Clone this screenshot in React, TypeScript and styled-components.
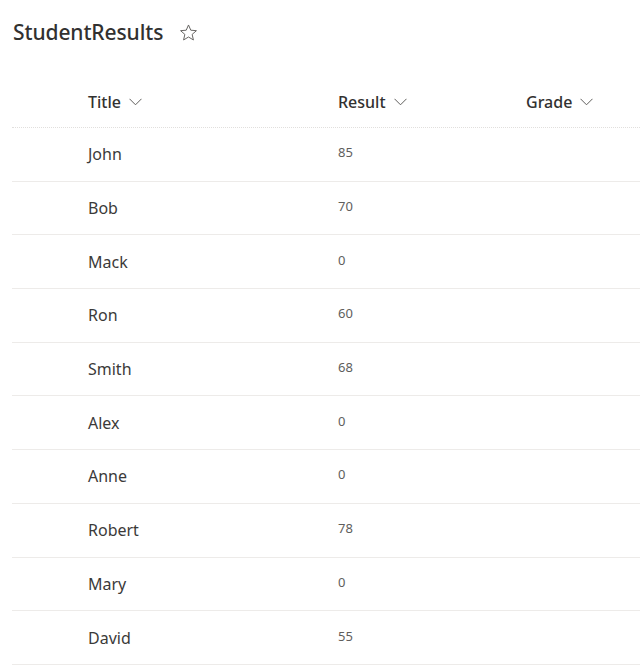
import React from 'react';
import styled, { createGlobalStyle } from 'styled-components';

const GlobalStyle = createGlobalStyle`
  body {
    margin: 0;
    background: #ffffff;
    font-family: "Segoe UI", "Noto Sans", "Open Sans", sans-serif;
    color: #323130;
  }
`;

const Page = styled.div`
  width: 640px;
  height: 669px;
  overflow: hidden;
  padding-left: 12px;
  box-sizing: border-box;
`;

const Heading = styled.div`
  display: flex;
  align-items: center;
  gap: 16px;
  height: 64px;
  padding-left: 1px;
`;

const ListTitle = styled.h1`
  margin: 0;
  font-size: 21px;
  font-weight: 500;
  color: #323130;
  letter-spacing: -0.1px;
`;

const FavButton = styled.button`
  display: flex;
  align-items: center;
  padding: 0;
  border: none;
  background: transparent;
  color: #605e5c;
  cursor: pointer;
`;

const Row = styled.div<{ $header?: boolean }>`
  display: grid;
  grid-template-columns: 76px 250px 188px 1fr;
  align-items: center;
  height: ${p => (p.$header ? '64px' : '53.7px')};
  box-sizing: border-box;
  border-bottom: 1px ${p => (p.$header ? 'dotted #e1dfdd' : 'solid #edebe9')};
`;

const HeaderCell = styled.div`
  display: flex;
  align-items: center;
  gap: 8px;
  font-size: 16px;
  font-weight: 500;
  color: #323130;
  padding-top: 12px;
`;

const TitleCell = styled.div`
  font-size: 16px;
  color: #3b3a39;
`;

const NumberCell = styled.div`
  font-size: 13px;
  color: #605e5c;
  margin-top: -4px;
`;

const Chevron = () => (
  <svg width="13" height="8" viewBox="0 0 13 8" fill="none">
    <path d="M0.5 0.8 L6.5 6.8 L12.5 0.8" stroke="#605e5c" strokeWidth="1" />
  </svg>
);

const StarIcon = () => (
  <svg width="19" height="19" viewBox="0 0 24 24" fill="none">
    <path
      d="M12 2.5l2.9 6.6 7.1.6-5.4 4.7 1.6 7-6.2-3.7-6.2 3.7 1.6-7L2 9.7l7.1-.6z"
      stroke="#605e5c"
      strokeWidth="1.2"
      strokeLinejoin="round"
    />
  </svg>
);

const students = [
  { title: 'John', result: 85 },
  { title: 'Bob', result: 70 },
  { title: 'Mack', result: 0 },
  { title: 'Ron', result: 60 },
  { title: 'Smith', result: 68 },
  { title: 'Alex', result: 0 },
  { title: 'Anne', result: 0 },
  { title: 'Robert', result: 78 },
  { title: 'Mary', result: 0 },
  { title: 'David', result: 55 },
];

export default function App() {
  return (
    <Page>
      <GlobalStyle />
      <Heading>
        <ListTitle>StudentResults</ListTitle>
        <FavButton aria-label="Favorite">
          <StarIcon />
        </FavButton>
      </Heading>
      <Row $header>
        <div />
        <HeaderCell>Title <Chevron /></HeaderCell>
        <HeaderCell>Result <Chevron /></HeaderCell>
        <HeaderCell>Grade <Chevron /></HeaderCell>
      </Row>
      {students.map(s => (
        <Row key={s.title}>
          <div />
          <TitleCell>{s.title}</TitleCell>
          <NumberCell>{s.result}</NumberCell>
          <div />
        </Row>
      ))}
    </Page>
  );
}
